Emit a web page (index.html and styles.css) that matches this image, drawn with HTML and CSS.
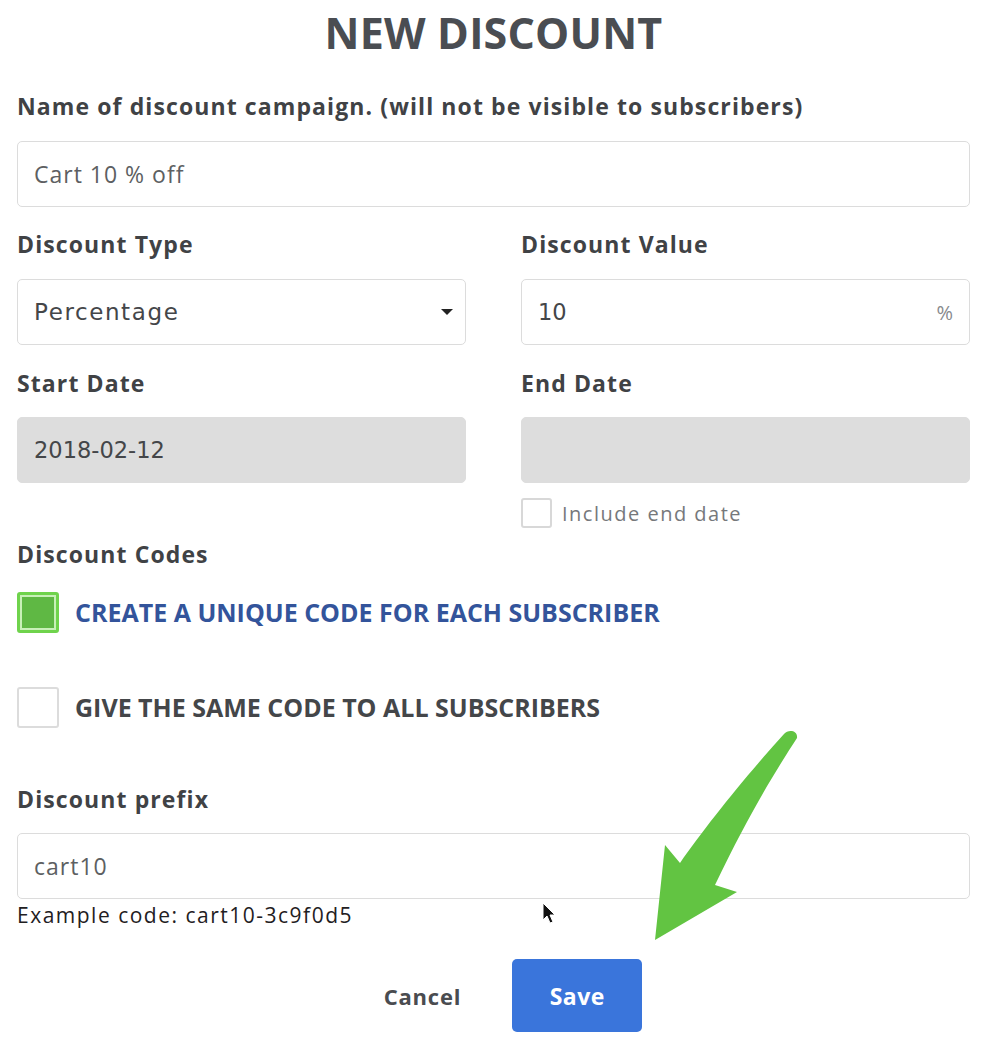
FILE: index.html
```html
<!DOCTYPE html>
<html lang="en">
<head>
<meta charset="utf-8">
<title>New Discount</title>
<link rel="stylesheet" href="styles.css">
</head>
<body>
<div class="page">
  <h1 class="title">NEW DISCOUNT</h1>

  <div class="field first">
    <label class="label">Name of discount campaign. (will not be visible to subscribers)</label>
    <div class="input">Cart 10 % off</div>
  </div>

  <div class="row">
    <div class="field">
      <label class="label">Discount Type</label>
      <div class="input select">
        <span class="val-geo wide">Percentage</span>
        <span class="caret"></span>
      </div>
    </div>
    <div class="field">
      <label class="label">Discount Value</label>
      <div class="input suffix">
        <span class="val-geo">10</span>
        <span class="pct">%</span>
      </div>
    </div>
  </div>

  <div class="row">
    <div class="field">
      <label class="label">Start Date</label>
      <div class="input disabled"><span class="val-geo">2018-02-12</span></div>
    </div>
    <div class="field">
      <label class="label">End Date</label>
      <div class="input disabled"></div>
      <div class="small-check">
        <span class="box-sm"></span>
        <span>Include end date</span>
      </div>
    </div>
  </div>

  <div class="codes">
    <label class="label">Discount Codes</label>
    <div class="option checked">
      <span class="box-lg"></span>
      <span class="opt-text">CREATE A UNIQUE CODE FOR EACH SUBSCRIBER</span>
    </div>
    <div class="option">
      <span class="box-lg"></span>
      <span class="opt-text">GIVE THE SAME CODE TO ALL SUBSCRIBERS</span>
    </div>
  </div>

  <div class="field prefix">
    <label class="label">Discount prefix</label>
    <div class="input">cart10</div>
    <div class="example">Example code: cart10-3c9f0d5</div>
  </div>

  <div class="actions">
    <button class="btn-cancel">Cancel</button>
    <button class="btn-save">Save</button>
  </div>
</div>

<svg class="arrow" width="160" height="230" viewBox="0 0 160 230">
  <path d="M5 218 L15 123 L30 141 C55 105 95 55 134 12 C138 7 148 8 147 16 C125 50 100 90 65 163 L87 170 Z" fill="#62c442"/>
</svg>

<svg class="cursor" width="16" height="24" viewBox="0 0 16 24">
  <path d="M1 1 L1 18 L5 14 L8 21 L11 20 L8 13 L13 13 Z" fill="#111" stroke="#fff" stroke-width="1"/>
</svg>
</body>
</html>
```

FILE: styles.css
```css
html, body {
  margin: 0;
  padding: 0;
  background: #ffffff;
}

body {
  font-family: "Open Sans", "Liberation Sans", sans-serif;
  width: 988px;
  height: 1044px;
  overflow: hidden;
  position: relative;
}

.page {
  padding: 0 18px 0 17px;
  display: flex;
  flex-direction: column;
}

.title {
  margin: 4px 0 0;
  text-align: center;
  font-size: 43px;
  font-weight: 700;
  color: #4a4d52;
  line-height: 58px;
  letter-spacing: 0.2px;
}

.label {
  display: block;
  font-size: 23px;
  font-weight: 700;
  color: #404245;
  line-height: 30px;
  letter-spacing: 1.1px;
  margin-bottom: 20px;
}

.field {
  display: flex;
  flex-direction: column;
  margin-top: 22px;
}

.field.first {
  margin-top: 29px;
}

.row {
  display: grid;
  grid-template-columns: 1fr 1fr;
  column-gap: 55px;
}

.row + .row .label {
  margin-top: 1px;
  margin-bottom: 19px;
}

.input {
  box-sizing: border-box;
  height: 66px;
  border: 1.5px solid #dcdcdc;
  border-radius: 5px;
  background: #fff;
  padding: 0 16px;
  display: flex;
  align-items: center;
  font-size: 23px;
  letter-spacing: 1px;
  color: #5d5f62;
}

.val-geo {
  font-family: "DejaVu Sans", "Open Sans", sans-serif;
  font-size: 22.5px;
  letter-spacing: 0;
  color: #444649;
}

.val-geo.wide {
  font-size: 23px;
  letter-spacing: 1.6px;
}

.select {
  justify-content: space-between;
}

.caret {
  width: 0;
  height: 0;
  border-left: 6px solid transparent;
  border-right: 6px solid transparent;
  border-top: 6px solid #222;
  margin-right: -4px;
}

.suffix {
  justify-content: space-between;
}

.pct {
  font-size: 20px;
  letter-spacing: 0;
  color: #888a8d;
}

.disabled {
  background: #dddddd;
  border-color: #dddddd;
}

.small-check {
  display: flex;
  align-items: center;
  gap: 10px;
  margin-top: 15px;
  height: 30px;
  font-size: 20px;
  letter-spacing: 1.5px;
  color: #76787b;
}

.box-sm {
  width: 31px;
  height: 30px;
  border: 2px solid #d8d8d8;
  border-radius: 3px;
  box-sizing: border-box;
  flex: none;
}

.codes {
  display: flex;
  flex-direction: column;
  margin-top: 11px;
}

.codes .label {
  margin-bottom: 22px;
}

.option {
  display: flex;
  align-items: center;
  gap: 16px;
  height: 42px;
  margin-bottom: 53px;
}

.option:last-child {
  margin-bottom: 0;
}

.box-lg {
  width: 42px;
  height: 41px;
  box-sizing: border-box;
  border: 2px solid #dcdcdc;
  border-radius: 3px;
  flex: none;
}

.checked .box-lg {
  border: 3px solid #6fd34c;
  background: #5fb844;
  box-shadow: inset 0 0 0 2px #c8f0b8;
}

.opt-text {
  font-size: 25px;
  font-weight: 700;
  color: #444649;
  letter-spacing: 0;
}

.checked .opt-text {
  color: #33549b;
}

.prefix {
  margin-top: 56px;
}

.prefix .label {
  margin-bottom: 19px;
}

.example {
  margin-top: 2px;
  font-size: 21px;
  letter-spacing: 1.5px;
  line-height: 29px;
  color: #1f2022;
}

.actions {
  display: flex;
  justify-content: center;
  align-items: center;
  gap: 51px;
  margin-top: 29px;
  padding-left: 39px;
}

.btn-cancel {
  background: none;
  border: none;
  font-family: inherit;
  font-size: 22px;
  font-weight: 700;
  letter-spacing: 0.8px;
  color: #4a4c50;
  padding: 0;
}

.btn-save {
  width: 130px;
  height: 73px;
  border: none;
  border-radius: 5px;
  background: #3a75db;
  color: #fff;
  font-family: inherit;
  font-size: 23px;
  font-weight: 700;
  letter-spacing: 0.5px;
}

.arrow {
  position: absolute;
  left: 650px;
  top: 722px;
}

.cursor {
  position: absolute;
  left: 542px;
  top: 902px;
}
```
